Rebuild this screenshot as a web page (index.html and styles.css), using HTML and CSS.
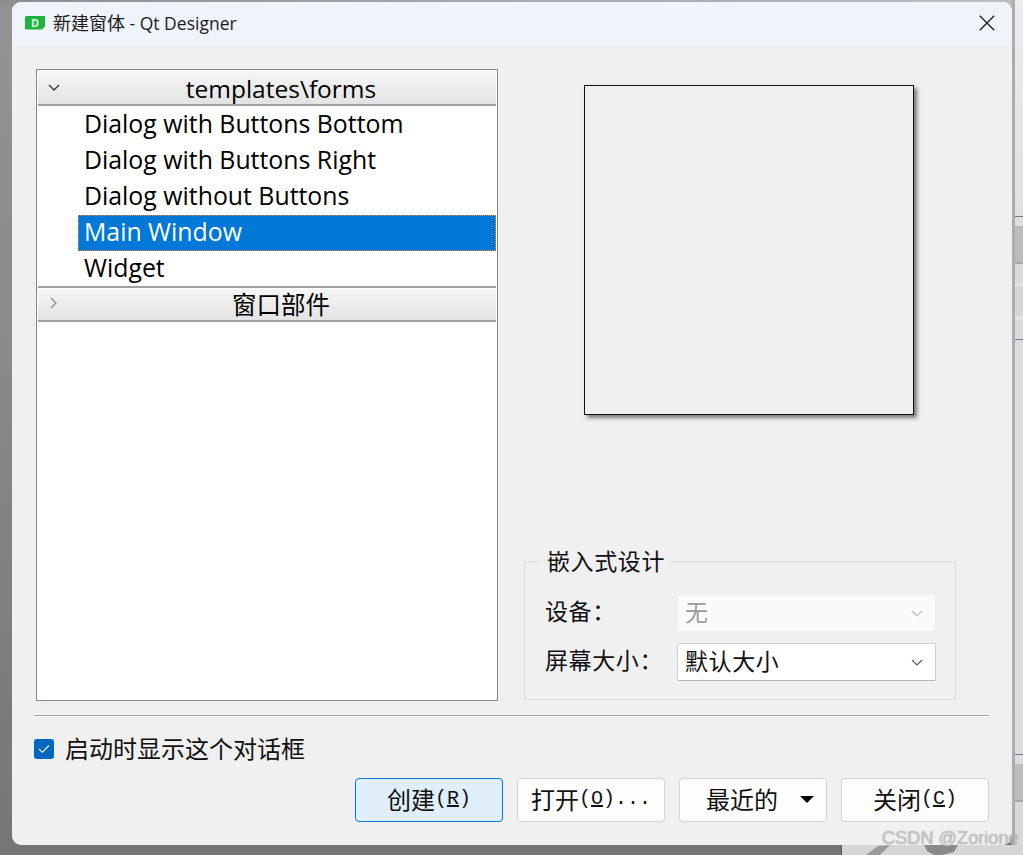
FILE: index.html
```html
<!DOCTYPE html>
<html lang="zh-CN">
<head>
<meta charset="utf-8">
<title>新建窗体 - Qt Designer</title>
<link rel="stylesheet" href="styles.css">
</head>
<body>
<div class="desktop">
  <div class="bg-top"></div>
  <div class="bg-right"></div>
  <div class="bg-bottom">
    <svg class="bg-art" width="182" height="10" viewBox="0 0 182 10"><path d="M24 10 L36 1 L48 0 L38 10Z" fill="#9a9a9a"/><path d="M82 0 H116 L112 7 L100 10 H92 L85 6Z" fill="#8a8a8a"/></svg>
  </div>
  <div class="window">
    <header class="titlebar">
      <svg class="app-icon" width="20" height="14" viewBox="0 0 20 14"><path d="M0 1.5 Q0 0 1.5 0 H20 V10.5 L17 13.5 H0Z" fill="#1fb141"/><rect x="6" y="2" width="8" height="10" fill="#2cc655" opacity=".5"/><text x="10" y="10.6" class="app-letter" text-anchor="middle">D</text></svg>
      <span class="title">新建窗体<span class="title-latin"> - Qt Designer</span></span>
      <svg class="close" width="16" height="16" viewBox="0 0 16 16"><path d="M.8.8 15.2 15.2M15.2.8.8 15.2" stroke="#1a1a1a" stroke-width="1.3" fill="none"/></svg>
    </header>
    <div class="content">
      <div class="main">
        <div class="tree">
          <div class="section">
            <span class="arrow"><svg width="12" height="8" viewBox="0 0 12 8"><path d="M1 1 6 6 11 1" stroke="#333" stroke-width="1.3" fill="none"/></svg></span>
            <span class="section-label">templates\forms</span>
          </div>
          <div class="rows">
            <div class="row">Dialog with Buttons Bottom</div>
            <div class="row">Dialog with Buttons Right</div>
            <div class="row">Dialog without Buttons</div>
            <div class="row selected">Main Window</div>
            <div class="row">Widget</div>
          </div>
          <div class="section closed">
            <span class="arrow"><svg width="8" height="12" viewBox="0 0 8 12"><path d="M1 1 6 6 1 11" stroke="#8a8a8a" stroke-width="1.3" fill="none"/></svg></span>
            <span class="section-label cjk">窗口部件</span>
          </div>
        </div>
        <div class="side">
          <div class="preview-wrap"><div class="preview"></div></div>
          <div class="group">
            <div class="group-title">嵌入式设计</div>
            <div class="form-row">
              <span class="form-label">设备：</span>
              <div class="combo disabled"><span class="combo-text">无</span><svg width="12" height="7" viewBox="0 0 12 7"><path d="M1 1 6 6 11 1" stroke="#bdbdbd" stroke-width="1.1" fill="none"/></svg></div>
            </div>
            <div class="form-row">
              <span class="form-label">屏幕大小：</span>
              <div class="combo"><span class="combo-text">默认大小</span><svg width="12" height="7" viewBox="0 0 12 7"><path d="M1 1 6 6 11 1" stroke="#555" stroke-width="1.1" fill="none"/></svg></div>
            </div>
          </div>
        </div>
      </div>
      <div class="separator"></div>
      <label class="check">
        <span class="box"><svg width="12" height="10" viewBox="0 0 12 10"><path d="M1 5 4.3 8.3 11 1.5" stroke="#fff" stroke-width="1.1" fill="none"/></svg></span>
        <span class="check-text">启动时显示这个对话框</span>
      </label>
      <div class="buttons">
        <div class="btn primary">创建<span class="mono">(<u>R</u>)</span></div>
        <div class="btn">打开<span class="mono">(<u>O</u>)...</span></div>
        <div class="btn menu">最近的<span class="caret"></span></div>
        <div class="btn">关闭<span class="mono">(<u>C</u>)</span></div>
      </div>
    </div>
  </div>
  <div class="watermark">CSDN @Zorione</div>
</div>
</body>
</html>
```
FILE: styles.css
```css
* { box-sizing: border-box; }
html, body { margin: 0; padding: 0; }
body { font-family: "Noto Sans CJK SC", "Noto Sans", sans-serif; color: #000; }

.desktop {
  position: relative;
  width: 1023px;
  height: 855px;
  overflow: hidden;
  padding: 2px 0 0 12px;
  background: linear-gradient(180deg, #939393 0%, #8a8a8a 40%, #757575 100%);
}
.bg-top {
  position: absolute;
  left: 0; top: 0;
  width: 1023px; height: 6px;
  background: linear-gradient(90deg, #8e8e8e 0%, #a4a4a4 40%, #bdbdbd 100%);
}
.bg-right {
  position: absolute;
  left: 1012px; top: 0;
  width: 11px; height: 855px;
  background:
    linear-gradient(90deg, #adadad 0, #adadad 3px, transparent 3px),
    linear-gradient(180deg,
      #ececec 0, #e0e0e0 216px, #737a85 216px, #737a85 217px, #dedede 217px,
      #dedede 226px, #bdbdbd 226px, #bdbdbd 262px, #a8a8a8 262px, #a8a8a8 264px,
      #dadada 264px, #dadada 283px, #e4e4e4 283px, #e4e4e4 286px, #d6d6d6 286px,
      #d6d6d6 316px, #e2e2e2 316px, #e2e2e2 320px, #dadada 320px, #dadada 339px,
      #737a85 339px, #737a85 340px, #dedede 340px, #dcdcdc 754px,
      #737a85 754px, #737a85 755px, #dedede 755px, #dedede 764px,
      #bdbdbd 764px, #bdbdbd 800px, #a8a8a8 800px, #a8a8a8 802px, #d8d8d8 802px);
}
.bg-bottom {
  position: absolute;
  left: 841px; top: 845px;
  width: 182px; height: 10px;
  background: #d6d6d6;
  border-left: 1px solid #555;
}
.bg-art { display: block; }

.window {
  position: relative;
  width: 1000px;
  height: 843px;
  border-radius: 9px;
  overflow: hidden;
  background: #f0f0f0;
}
.titlebar {
  display: flex;
  align-items: center;
  height: 43px;
  padding: 0 17px 2px 13px;
  background: #eff3fa;
}
.app-icon { flex: none; margin-right: 8px; margin-top: 1px; }
.app-letter { font: 700 10px "Liberation Sans", sans-serif; fill: #e8fff0; }
.title { flex: 1; font-size: 18px; line-height: 24px; color: #1c1c1c; font-family: "Noto Sans CJK SC", sans-serif; }
.title-latin { font-family: "Open Sans", sans-serif; font-size: 17.5px; }
.close { flex: none; }

.content { padding: 24px 23px 0 22px; }
.main { display: flex; height: 632px; margin-left: 2px; }
.tree {
  flex: none;
  width: 462px;
  height: 632px;
  border: 1px solid #828790;
  background: #fff;
  padding: 1px;
  font-family: "Open Sans", "Noto Sans CJK SC", sans-serif;
}
.section {
  display: flex;
  align-items: center;
  height: 35px;
  padding-top: 2px;
  background: linear-gradient(180deg, #f6f6f6 0%, #e3e3e3 100%);
  border-bottom: 2px solid #a0a0a0;
}
.section.closed {
  height: 36px;
  padding-top: 0;
  border-top: 2px solid #a0a0a0;
  box-shadow: inset 0 1px 0 #fff;
}
.arrow { flex: none; display: flex; justify-content: center; width: 32px; margin-right: -4px; margin-top: -2px; }
.section-label { flex: 1; text-align: center; font-size: 24.5px; line-height: 32px; }
.section-label.cjk { font-family: "Noto Sans CJK SC", sans-serif; }
.rows { padding: 1px 0 0 40px; }
.row {
  display: flex;
  align-items: center;
  height: 36px;
  padding: 0 0 4px 6px;
  font-size: 24.85px;
  white-space: nowrap;
}
.row:last-child { height: 35px; padding-bottom: 3px; }
.row.selected {
  color: #fff;
  background-color: #0078d7;
  background-image:
    repeating-linear-gradient(90deg, #f58a1f 0 1px, transparent 1px 2px),
    repeating-linear-gradient(90deg, #f58a1f 0 1px, transparent 1px 2px),
    repeating-linear-gradient(180deg, #f58a1f 0 1px, transparent 1px 2px),
    repeating-linear-gradient(180deg, #f58a1f 0 1px, transparent 1px 2px);
  background-size: 100% 1px, 100% 1px, 1px 100%, 1px 100%;
  background-position: 0 0, 0 100%, 0 0, 100% 0;
  background-repeat: no-repeat;
}

.side { flex: 1; display: flex; flex-direction: column; padding-left: 26px; }
.preview-wrap { height: 492px; padding: 16px 0 0 60px; }
.preview {
  width: 330px;
  height: 330px;
  border: 1px solid #111;
  background: #f0f0f0;
  box-shadow: 3px 3px 4px rgba(0,0,0,.5);
}
.group {
  position: relative;
  width: 432px;
  height: 139px;
  border: 1px solid #dcdcdc;
  padding: 32px 20px 0 20px;
}
.group-title {
  position: absolute;
  left: 16px;
  top: -17px;
  padding: 0 6px 2px;
  background: #f0f0f0;
  font-size: 23px;
  line-height: 30px;
  color: #111;
  letter-spacing: .6px;
}
.form-row { display: flex; align-items: center; height: 38px; margin-bottom: 11px; }
.form-label { flex: none; width: 132px; font-size: 23px; line-height: 32px; height: 38px; letter-spacing: .6px; color: #111; }
.combo {
  flex: none;
  display: flex;
  align-items: center;
  justify-content: space-between;
  width: 259px;
  height: 38px;
  padding: 0 12px 0 7px;
  background: #fff;
  border: 1px solid #cfcfcf;
  border-bottom-color: #b4b4b4;
  border-radius: 2px;
  color: #111;
}
.combo-text { font-size: 23px; line-height: 33px; height: 36px; letter-spacing: .6px; }
.combo.disabled { background: #fafafa; border-color: #ececec; color: #9a9a9a; }

.separator { height: 2px; margin: 14px 0 0 0; background: #a3a3a3; border-bottom: 1px solid #fff; }
.check { display: flex; align-items: center; height: 34px; margin-top: 15px; font-size: 24px; color: #111; }
.check-text { line-height: 32px; height: 34px; }
.box {
  flex: none;
  display: flex;
  align-items: center;
  justify-content: center;
  width: 20px;
  height: 20px;
  margin-right: 11px;
  border-radius: 3px;
  background: #0067c0;
}
.buttons { display: flex; justify-content: flex-end; gap: 14px; margin-top: 12px; }
.btn {
  display: flex;
  align-items: center;
  justify-content: center;
  width: 148px;
  height: 44px;
  padding-bottom: 4px;
  background: #fdfdfd;
  border: 1px solid #d2d2d2;
  border-radius: 4px;
  font-size: 24px;
  color: #111;
  position: relative;
  white-space: nowrap;
}
.btn.primary { background: #e0eef9; border-color: #0078d4; }
.btn.menu { padding-right: 22px; }
.mono { font-family: "Liberation Mono", monospace; font-size: 20px; margin-left: 0; }
.caret {
  position: absolute;
  right: 12px;
  top: 17px;
  width: 0; height: 0;
  border-left: 7px solid transparent;
  border-right: 7px solid transparent;
  border-top: 7px solid #000;
}
.watermark {
  position: absolute;
  left: 882px;
  top: 827px;
  font: 18.2px/22px "Liberation Sans", sans-serif;
  color: rgba(255,255,255,.5);
  text-shadow: 0 0 1px rgba(90,90,90,.8);
  white-space: nowrap;
}
```
